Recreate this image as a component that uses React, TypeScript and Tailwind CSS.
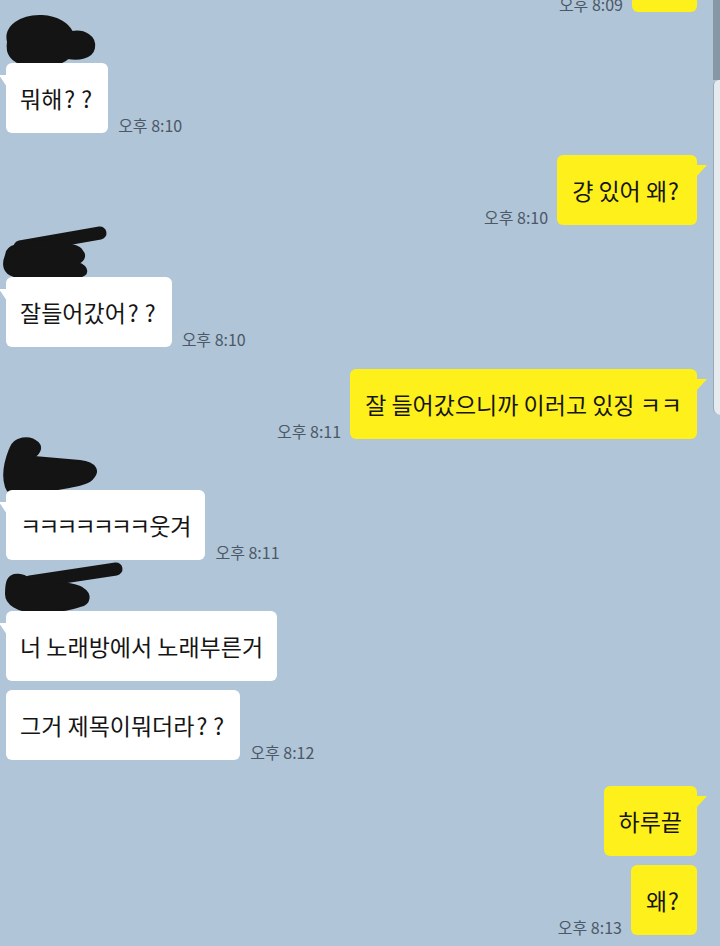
import React from "react";

const FONT = { fontFamily: '"Noto Sans CJK KR", "Noto Sans", sans-serif' };

function LeftTail() {
  return (
    <svg className="absolute left-[-7px] top-[12px]" width="8" height="12" viewBox="0 0 8 12">
      <path d="M0 0 L8 0 L8 12 Z" fill="#ffffff" />
    </svg>
  );
}

function RightTail() {
  return (
    <svg className="absolute right-[-10px] top-[10px]" width="11" height="12" viewBox="0 0 11 12">
      <path d="M0 0 L11 0 L0 12 Z" fill="#fef01b" />
    </svg>
  );
}

function Time({ t }: { t: string }) {
  return (
    <span className="text-[16px] leading-[18px] text-[#4b5866] whitespace-nowrap mb-[-1px]">{t}</span>
  );
}

function LeftMsg({ children, time, tail, className }: { children: React.ReactNode; time?: string; tail?: boolean; className?: string }) {
  return (
    <div className={"flex items-end gap-[10px] pl-[6px] " + (className ?? "")}>
      <div className="relative h-[70px] px-[14px] flex items-center bg-white rounded-[6px] text-[23px] text-[#151515] whitespace-nowrap">
        {tail && <LeftTail />}
        {children}
      </div>
      {time && <Time t={time} />}
    </div>
  );
}

function RightMsg({ children, time, tail, className, boxClass }: { children?: React.ReactNode; time?: string; tail?: boolean; className?: string; boxClass?: string }) {
  return (
    <div className={"flex items-end justify-end gap-[9px] pr-[16px] " + (className ?? "")}>
      {time && <Time t={time} />}
      <div className={"relative h-[70px] px-[15px] flex items-center bg-[#fef01b] rounded-[6px] text-[23px] text-[#151515] whitespace-nowrap " + (boxClass ?? "")}>
        {tail && <RightTail />}
        {children}
      </div>
    </div>
  );
}

function Q() {
  return <span className="ml-[1px] mr-[3px]">?</span>;
}

function QQ() {
  return (
    <>
      <span className="ml-[2px]">?</span>
      <span className="ml-[6px] mr-[2px]">?</span>
    </>
  );
}

function Scribble({ h, children }: { h: number; children: React.ReactNode }) {
  return (
    <div className="relative" style={{ height: h }}>
      <svg className="absolute left-0 top-0 overflow-visible" width="140" height={h} viewBox={`0 0 140 ${h}`}>
        <g fill="#141414" stroke="#141414" strokeLinecap="round" strokeLinejoin="round">
          {children}
        </g>
      </svg>
    </div>
  );
}

export default function App() {
  return (
    <div className="w-[720px] h-[946px] overflow-hidden bg-[#b1c5d8] flex" style={FONT}>
      <div className="flex-1 flex flex-col">
        <RightMsg className="mt-[-58px]" time="오후 8:09" boxClass="w-[65px]" />

        <Scribble h={51}>
          <path d="M8 30 C4 14 22 3 42 4 C58 5 68 12 72 20 C84 18 96 24 94 36 C92 46 78 48 68 46 C60 54 40 56 26 53 C12 50 6 42 8 30 Z" strokeWidth="2" />
        </Scribble>
        <LeftMsg time="오후 8:10" tail>뭐해<QQ /></LeftMsg>

        <RightMsg className="mt-[22px]" time="오후 8:10" tail>걍 있어 왜<Q /></RightMsg>

        <Scribble h={52}>
          <path d="M20 22 L100 8" strokeWidth="13" fill="none" />
          <path d="M6 30 C6 20 24 16 48 17 C66 18 80 20 82 26 C86 30 84 36 78 38 C88 42 90 50 78 52 C60 55 30 54 14 51 C4 48 2 40 6 30 Z" strokeWidth="2" />
        </Scribble>
        <LeftMsg time="오후 8:10" tail>잘들어갔어<QQ /></LeftMsg>

        <RightMsg className="mt-[22px]" time="오후 8:11" tail>잘 들어갔으니까 이러고 있징 ㅋㅋ</RightMsg>

        <Scribble h={51}>
          <path d="M10 10 C14 -2 30 -4 38 4 C42 8 40 14 34 18 L80 22 C96 24 100 32 92 40 C84 48 60 48 40 54 C26 60 10 60 6 48 C2 36 6 20 10 10 Z" strokeWidth="2" />
        </Scribble>
        <LeftMsg time="오후 8:11" tail>
          <span className="tracking-[-3px]">ㅋㅋㅋㅋㅋㅋㅋ</span>
          <span className="ml-[2px]">웃겨</span>
        </LeftMsg>

        <Scribble h={51}>
          <path d="M30 22 L116 9" strokeWidth="13" fill="none" />
          <path d="M8 20 C12 12 24 14 30 20 C50 22 70 22 82 28 C92 34 90 44 80 46 C70 50 50 52 36 52 C18 52 6 44 6 34 C6 28 6 24 8 20 Z" strokeWidth="2" />
        </Scribble>
        <LeftMsg tail>너 노래방에서 노래부른거</LeftMsg>
        <LeftMsg className="mt-[9px]" time="오후 8:12">그거 제목이뭐더라<QQ /></LeftMsg>

        <RightMsg className="mt-[26px]" tail>하루끝</RightMsg>
        <RightMsg className="mt-[9px]" time="오후 8:13">왜<Q /></RightMsg>
      </div>

      <div className="w-[7px] flex flex-col">
        <div className="h-[80px] bg-[#8797a6]" />
        <div className="h-[335px] bg-[#e6ebf0] border-l border-[#9aa8b5] rounded-bl-[8px] rounded-tl-[6px]" />
      </div>
    </div>
  );
}
